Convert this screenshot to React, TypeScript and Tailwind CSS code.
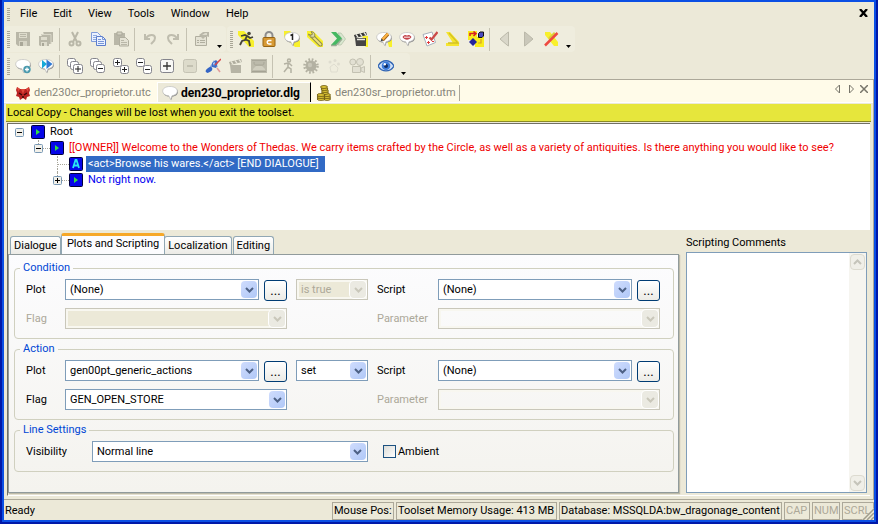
import React, { useState } from 'react';
import clsx from 'clsx';

const BUBBLE = 'M8 1.5c4.4 0 7.3 1.9 7.3 4.6 0 2.6-2.4 4.3-5.3 4.6L8.5 14.500l-1.700-3.700C3.300 10.600.7 8.800.7 6.100.7 3.400 3.600 1.500 8 1.500z';

const Bubble = () => (
  <g>
    <path d={BUBBLE} fill="#8d8d8d" transform="translate(.6 .8)" />
    <path d={BUBBLE} fill="#fff" stroke="#bdbdbb" strokeWidth=".7" />
  </g>
);

const Box = ({ x, y, s = 9, sign }: { x: number; y: number; s?: number; sign?: string }) => {
  const c = s / 2;
  return (
    <g>
      <rect x={x + 0.5} y={y + 0.5} width={s - 1} height={s - 1} rx="2" fill="#fff" stroke="#84848c" />
      {sign && <path d={`M${x + 2} ${y + c}h${s - 4}`} stroke="#222" />}
      {sign === '+' && <path d={`M${x + c} ${y + 2}v${s - 4}`} stroke="#222" />}
    </g>
  );
};

const icons: Record<string, React.ReactNode> = {
  save: (
    <g>
      <path d="M1 1h14v14H3l-2-2z" fill="#b9b7a8" />
      <path d="M4 2h8v5H4z" fill="#dedccd" />
      <path d="M5 3.500h6M5 5.500h6" stroke="#b9b7a8" />
      <path d="M4 10h8v5H4z" fill="#d6d4c5" />
      <path d="M5 11h3v4H5z" fill="#a9a798" />
    </g>
  ),
  saveAll: (
    <g>
      <path d="M5 1h10v10h-2v2h-2v2H2l-1-1V5h2V3h2z" fill="#b9b7a8" />
      <path d="M3.500 5V3.500h9.500V13M5.500 3V1.500" stroke="#d9d7c8" fill="none" />
      <path d="M3 6h6v3H3zM3 11h6v4H3z" fill="#dedccd" />
      <path d="M4 12h2v3H4z" fill="#a9a798" />
    </g>
  ),
  cut: (
    <g fill="none" stroke="#b9b7a8" strokeWidth="2">
      <path d="M5 1l5 10M11 1L6 11" />
      <circle cx="4.500" cy="12.500" r="2" />
      <circle cx="11.500" cy="12.500" r="2" />
    </g>
  ),
  copy: (
    <g>
      <path d="M1.500 1.500h6l3 3v6h-9z" fill="#eaf1ff" stroke="#7f9bd9" />
      <path d="M3 4.500h4M3 6.500h3M3 8.500h3" stroke="#8fabdf" />
      <path d="M6.500 5.500h6l3 3v6h-9z" fill="#eaf1ff" stroke="#5c7dcb" />
      <path d="M12.500 5.500v3h3M8 8.500h3M8 10.500h6M8 12.500h6" stroke="#7896d8" fill="none" />
    </g>
  ),
  paste: (
    <g>
      <path d="M1 2h11v12H1z" fill="#b9b7a8" />
      <path d="M4 1h5v3H4z" fill="#d6d4c5" stroke="#aaa899" />
      <path d="M6.500 6.500h6l3 3v5.500h-9z" fill="#e4e2d4" stroke="#b0ae9f" />
      <path d="M8 9.500h3M8 11.500h6M8 13.500h6" stroke="#b9b7a8" />
    </g>
  ),
  undo: (
    <g fill="none" stroke="#bfbdae" strokeWidth="2">
      <path d="M4 7c3-4 9-4 9 0 0 3-2 4-4 6" />
      <path d="M3 3v5h5" />
    </g>
  ),
  redo: (
    <g fill="none" stroke="#bfbdae" strokeWidth="2">
      <path d="M12 7c-3-4-9-4-9 0 0 3 2 4 4 6" />
      <path d="M13 3v5H8" />
    </g>
  ),
  props: (
    <g>
      <path d="M1.500 5.500h11v9h-11z" fill="#e4e2d4" stroke="#b0ae9f" />
      <path d="M3 9.500h2M6 9.500h5M3 11.500h2M6 11.500h5" stroke="#b0ae9f" />
      <path d="M5 4l4-3h6v5l-3-1-3 3-2-2z" fill="#b9b7a8" />
      <path d="M8 4l3-2h2v2z" fill="#dedccd" />
    </g>
  ),
  run: (
    <g>
      <path d="M0 0h6l10 10v6h-5L0 4z" fill="#f8f02c" />
      <circle cx="11" cy="2.500" r="1.800" fill="#44423a" />
      <path d="M3 5l4-1 3 1.500 2 1.500 3-1M9 5l-2 4-3 1-2 4M7.500 8.500L11 10l1 5" stroke="#44423a" strokeWidth="1.800" fill="none" />
    </g>
  ),
  lock: (
    <g>
      <path d="M4.500 8V4.500a3.500 3.500 0 0 1 7 0V8" fill="none" stroke="#8d8d8d" strokeWidth="2" />
      <rect x="2" y="6.500" width="12" height="9" rx="1" fill="#d79a35" stroke="#966414" />
      <path d="M10.500 9.500h-2.500a1.700 1.700 0 0 0 0 3.500h2.500" fill="none" stroke="#fff" strokeWidth="1.500" />
    </g>
  ),
  one: (
    <g>
      <path d="M0 0h6l10 10v6h-5L0 6z" fill="#f8f02c" />
      <Bubble />
      <path d="M6.500 4.500L8.500 3.500v5.500" fill="none" stroke="#222" strokeWidth="1.500" />
    </g>
  ),
  wrench: (
    <g>
      <path d="M0 0h6l10 10v6h-5L0 6z" fill="#f8f02c" />
      <path d="M5 5l8.500 8.500" stroke="#8f8a4a" strokeWidth="4" strokeLinecap="round" />
      <path d="M5 5l8.500 8.500" stroke="#ece27e" strokeWidth="2" strokeLinecap="round" />
      <path d="M4 .7c3 .3 4.500 2 3.500 5.300C4 7 2 5.500 1.500 3L4 4.500 5.500 3z" fill="#d9d6a8" stroke="#8f8a4a" />
    </g>
  ),
  chevrons: (
    <g>
      <path d="M8 2h3l4.500 6-4.500 6H8l4-6z" fill="#d9e8d0" stroke="#aab8a0" strokeWidth=".6" />
      <path d="M1 1h5l6 6.500L6 14H1l6-6.500z" fill="#46b862" />
      <path d="M1 14.500h5l6-6.500" fill="none" stroke="#9cab95" strokeWidth="1.300" />
    </g>
  ),
  clapper: (
    <g>
      <path d="M10 5h5v11h-2L8 12z" fill="#f8f02c" />
      <path d="M2 7h11v8H3z" fill="#454545" />
      <path d="M1 4l12-3 1 3L2 7z" fill="#333" />
      <path d="M3 3.500l2 2.500M7 2.500l2 2.500M11 1.500l2 2.500M4 8.500h8" stroke="#e8e8e0" strokeWidth="1.300" />
    </g>
  ),
  pencil: (
    <g>
      <path d="M11 9h5v7h-3z" fill="#f8f02c" />
      <Bubble />
      <path d="M6.500 9L12 3" stroke="#a46618" strokeWidth="3.400" />
      <path d="M6.500 8.500L12 2.500" stroke="#ffb545" strokeWidth="2" />
      <path d="M4.500 10.500l1-3 2 2z" fill="#444" />
    </g>
  ),
  mouth: (
    <g>
      <Bubble />
      <path d="M3.500 6c2-2.500 3-2 4.500-1.500C9.500 4 10.500 3.500 12.500 6 10 9.500 6 9.500 3.500 6z" fill="#c4434a" />
      <path d="M5 6.200h6" stroke="#f5dada" strokeWidth="1.200" />
    </g>
  ),
  check: (
    <g>
      <path d="M1 3.500l9-2.500 3.500 10.500-8.500 3.500z" fill="#fff" stroke="#a7afba" />
      <path d="M3 6.500h3M4.500 5v3M5 11.500h3M6.500 10v3M10 10.500h2" stroke="#e13b3b" />
      <path d="M7.500 6.500l2 2L15.500 1" fill="none" stroke="#cb4a48" strokeWidth="2.200" />
    </g>
  ),
  arrow: (
    <g>
      <path d="M1 1h4l9 10v4H1v-3h7z" fill="#f5e52e" />
      <path d="M4 2l9 10H3" fill="none" stroke="#d3c125" strokeWidth="1.300" />
    </g>
  ),
  flow: (
    <g>
      <path d="M0 0h9v6h7v10H7V9H0z" fill="#f8ec1b" />
      <path d="M10.500 2.500l1.500-1.500h3.500v4l-1.500 1.500h-3.500z" fill="#4a4ac0" stroke="#111" />
      <path d="M2 5V2.500h5M5.500.500L8 2.500 5.500 5" fill="none" stroke="#d82222" strokeWidth="1.500" />
      <path d="M5 7l4 4-4 4-4-4z" fill="#23239c" />
      <path d="M13 8v4h-3" fill="none" stroke="#d8a222" strokeWidth="1.200" />
    </g>
  ),
  prev: <path d="M11.500 1v14l-1.500-1L3 8l7-6z" fill="#d9d7c9" stroke="#bbb9aa" />,
  next: <path d="M4.500 1v14L6 14l7-6-7-6z" fill="#cac8ba" stroke="#bbb9aa" />,
  redx: (
    <g>
      <path d="M2 1h5l8 10v4h-4L2 4z" fill="#f8f02c" />
      <path d="M11 1l2 2-6 6-2-2z" fill="#d9cf3c" />
      <path d="M14.500 2L2 14.500" stroke="#ee4a40" strokeWidth="2.500" />
    </g>
  ),
  addBubble: (
    <g>
      <Bubble />
      <circle cx="12" cy="11.500" r="3.700" fill="#4a9aae" />
      <path d="M12 9.500v4M10 11.500h4" stroke="#fff" strokeWidth="1.300" />
    </g>
  ),
  playBubble: (
    <g>
      <Bubble />
      <path d="M4 2l5 4-5 4.500z" fill="#16a9d8" />
      <path d="M8.500 1.500l6 4.500-6 5z" fill="#2f7ad4" />
    </g>
  ),
  expandAll: (
    <g>
      <Box x={0} y={0} />
      <Box x={3} y={3} />
      <Box x={6} y={6} s={10} sign="+" />
    </g>
  ),
  collapseAll: (
    <g>
      <Box x={0} y={0} />
      <Box x={3} y={3} />
      <Box x={6} y={6} s={9} sign="-" />
    </g>
  ),
  expandTwo: (
    <g>
      <Box x={0} y={0} sign="+" />
      <Box x={7} y={7} sign="+" />
    </g>
  ),
  collapseTwo: (
    <g>
      <Box x={0} y={0} sign="-" />
      <Box x={7} y={7} sign="-" />
    </g>
  ),
  plus: (
    <g>
      <rect x="1.500" y="1.500" width="13" height="13" rx="2" fill="#f8f8f6" stroke="#84848c" />
      <path d="M4 8h8M8 4v8" stroke="#333" strokeWidth="1.300" />
    </g>
  ),
  minus: (
    <g>
      <rect x="1.500" y="1.500" width="13" height="13" rx="2" fill="#dddbcb" stroke="#c5c3b4" />
      <path d="M5 8h6" stroke="#a8a697" />
    </g>
  ),
  link: (
    <g>
      <path d="M4 12l5-8 3 5" fill="none" stroke="#7f9edb" strokeWidth="2" />
      <ellipse cx="4" cy="12" rx="3.700" ry="2.200" fill="#3465c5" transform="rotate(-35 4 12)" />
      <path d="M7 5l4-3 2 2-2 6-4-1z" fill="#3b6bc9" />
      <path d="M8 5l2-1-1 4z" fill="#cbd9f5" />
      <path d="M10 7l6-6" stroke="#d8474a" strokeWidth="1.500" />
      <path d="M12 10l3 4" stroke="#e29a9a" strokeWidth="1.500" />
    </g>
  ),
  clapperOff: (
    <g>
      <path d="M2 7h11v8H3z" fill="#b6b4a5" />
      <path d="M1 4l12-3 1 3L2 7z" fill="#aeac9d" />
      <path d="M3 3.500l2 2.500M7 2.500l2 2.500M11 1.500l2 2.500" stroke="#e8e6d8" strokeWidth="1.300" />
    </g>
  ),
  stage: (
    <g>
      <path d="M0 1h16v14H0z" fill="#bcbaab" />
      <path d="M1 2.500h14M3 4c0 4 2 3 5 3s5 1 5-3" stroke="#a9a798" fill="none" />
      <path d="M2 11l3-3h6l3 3v1H2z" fill="#d0cebf" />
      <path d="M1 13.500h14" stroke="#a5a394" />
    </g>
  ),
  walk: (
    <g fill="none" stroke="#b3b1a2" strokeWidth="1.500">
      <circle cx="9" cy="2.500" r="1.500" />
      <path d="M4 6l4-1 2 1 2 2M8 5v4l3 2v4M8 9l-4 5" />
    </g>
  ),
  gear: (
    <g>
      <circle cx="8" cy="8" r="5.500" fill="#b3b1a2" />
      <circle cx="8" cy="8" r="6.500" fill="none" stroke="#b3b1a2" strokeWidth="2.500" strokeDasharray="1.700 1.700" />
      <circle cx="7" cy="7" r="2.200" fill="#c8c6b8" />
    </g>
  ),
  paw: (
    <g fill="#dfddd0">
      <circle cx="4" cy="4" r="1.500" />
      <circle cx="9" cy="2.500" r="1.500" />
      <circle cx="12.500" cy="6" r="1.500" />
      <path d="M4 9l4-3 4 4-1 4H5z" fill="none" stroke="#dfddd0" />
    </g>
  ),
  camera: (
    <g fill="#e2e0d3" stroke="#c3c1b2">
      <circle cx="3.800" cy="4" r="3" />
      <circle cx="11" cy="4" r="3.500" />
      <path d="M3.500 8.500h8v6h-8zM12 10l3.500-1.500v6L12 13z" />
    </g>
  ),
  eye: (
    <g>
      <path d="M0 8c4-7 12-7 16 0-4 6.500-12 6.500-16 0z" fill="#cfe0f7" stroke="#2f64b4" strokeWidth="1.300" />
      <circle cx="8" cy="7.700" r="4.300" fill="#3d7cda" />
      <circle cx="8" cy="8" r="2" fill="#0f2c63" />
      <circle cx="6.800" cy="6.200" r="1.200" fill="#fff" />
    </g>
  ),
  creature: (
    <g>
      <path d="M2 2l3 2h6l3-2 1 3-1 3 1 3-3 1-1 3-3-2-3 2-1-3-3-1 1-3-1-3z" fill="#b92222" />
      <path d="M2 2l3 2-2 3zM14 2l-3 2 2 3zM6 4h4l-2 5z" fill="#e04a3c" />
      <path d="M4 8l3 2M12 8l-3 2M7 12h2" stroke="#3a0808" strokeWidth="1.300" />
    </g>
  ),
  speech: <Bubble />,
  coins: (
    <g fill="#e8cf3a" stroke="#5c4a0c" strokeWidth=".8">
      <path d="M8 11.500h6v3H8z" />
      <ellipse cx="11" cy="14" rx="3.500" ry="1.400" />
      <ellipse cx="11" cy="12" rx="3.500" ry="1.400" />
      <ellipse cx="11" cy="10" rx="3.500" ry="1.400" />
      <ellipse cx="9" cy="8" rx="3.500" ry="1.400" />
      <ellipse cx="9" cy="6" rx="3.500" ry="1.400" />
      <ellipse cx="8.500" cy="4" rx="3.500" ry="1.400" />
      <ellipse cx="8" cy="2" rx="3.500" ry="1.400" />
      <ellipse cx="5" cy="14" rx="4" ry="1.400" />
      <ellipse cx="5" cy="12" rx="4" ry="1.400" />
      <ellipse cx="5" cy="10" rx="4" ry="1.400" />
    </g>
  ),
};

const Icon = ({ name }: { name: string }) => (
  <svg viewBox="0 0 16 16" className="size-4 shrink-0" aria-hidden="true">
    {icons[name]}
  </svg>
);

const Grip = ({ className }: { className: string }) => (
  <svg className={clsx('w-[3px] shrink-0', className)} aria-hidden="true">
    <path d="M1.500 0v30" stroke="#a8a595" strokeWidth="3" strokeDasharray="1 1" />
  </svg>
);

const mainTools = ['save', 'saveAll', '|', 'cut', 'copy', 'paste', '|', 'undo', 'redo', '|', 'props', 'v'];
const scriptTools = [
  'run', 'lock', 'one', 'wrench', 'chevrons', 'clapper', 'pencil', 'mouth', 'check', 'arrow', 'flow',
  '|', 'prev', 'next', 'redx', 'v',
];
const dialogTools = [
  'addBubble', 'playBubble', '|', 'expandAll', 'collapseAll', 'expandTwo', 'collapseTwo', 'plus', 'minus',
  'link', 'clapperOff', 'stage', '|', 'walk', 'gear', 'paw', 'camera', '|', 'eye', 'v',
];

const Toolbar = ({ label, tools }: { label: string; tools: string[] }) => (
  <div role="toolbar" aria-label={label} className="flex h-[26px] items-center rounded-sm bg-[#efedde] pl-[3px]">
    <Grip className="h-[17px]" />
    <div className="flex items-center pl-px">
      {tools.map((tool, i) => {
        if (tool === '|') return <span key={i} className="mr-[3px] ml-[2px] h-[23px] w-px bg-[#c5c2b2]" />;
        if (tool === 'v') {
          return (
            <button key={i} type="button" aria-label="Toolbar options" className="flex h-[23px] w-[13px] items-end justify-center pb-[3px]">
              <svg viewBox="0 0 5 3" className="h-[3px] w-[5px]"><path d="M0 0h5L2.500 3z" /></svg>
            </button>
          );
        }
        return (
          <button key={i} type="button" aria-label={tool} className="flex h-[23px] w-[23px] items-center justify-center">
            <Icon name={tool} />
          </button>
        );
      })}
    </div>
  </div>
);

interface ComboProps {
  label: string;
  options: string[];
  disabled?: boolean;
  blank?: boolean;
  id?: string;
  className?: string;
}

const Combo = ({ label, options, disabled, blank, id, className }: ComboProps) => (
  <div
    className={clsx(
      'relative h-[21px] border',
      disabled ? 'border-[#c9c7ba]' : 'border-[#7f9db9] bg-white',
      className,
    )}
  >
    <select
      id={id}
      aria-label={label}
      disabled={disabled}
      className={clsx(
        'block h-full w-full appearance-none border-2 pr-5 pl-[2px] text-black opacity-100 outline-none disabled:text-[#aca899]',
        disabled ? 'border-[#f8f7f0]' : 'border-white',
        disabled && !blank ? 'bg-[#ece9d8]' : 'bg-transparent',
      )}
    >
      {options.map((option) => (
        <option key={option}>{option}</option>
      ))}
    </select>
    <span
      className={clsx(
        'pointer-events-none absolute inset-y-px right-px flex w-[16px] items-center justify-center rounded-sm',
        disabled ? 'bg-[#ebeae2] text-[#c9c7ba] ring-1 ring-white' : 'bg-linear-to-br from-[#cfdcfd] to-[#b0c8f7] text-[#4d6185]',
      )}
    >
      <Chevron />
    </span>
  </div>
);

const Chevron = ({ up }: { up?: boolean }) => (
  <svg viewBox="0 0 9 6" className={clsx('h-[6px] w-[9px]', up && 'rotate-180')} aria-hidden="true">
    <path d="M1 1l3.500 3.500L8 1" fill="none" stroke="currentColor" strokeWidth="2" />
  </svg>
);

const Browse = ({ label }: { label: string }) => (
  <button
    type="button"
    aria-label={label}
    className="mt-px ml-[5px] flex h-[21px] w-[23px] items-center justify-center rounded-[3px] border border-[#003c74] bg-linear-to-b from-white to-[#ecebe6] text-[13px]"
  >
    ...
  </button>
);

const Group = ({ title, children }: { title: string; children: React.ReactNode }) => (
  <fieldset className="min-w-0 rounded border border-[#d0d0bf] pr-[13px] pb-[9px] pl-[11px]">
    <legend className="-ml-[6px] h-3 px-[3px] leading-3 text-[#0046d5]">{title}</legend>
    {children}
  </fieldset>
);

interface LogicGroupProps {
  title: string;
  plot: string;
  flag?: string;
  operator: string;
}

const LogicGroup = ({ title, plot, flag, operator }: LogicGroupProps) => {
  const key = title.toLowerCase();
  return (
    <Group title={title}>
      <div className="mt-[5px] grid grid-cols-[39px_1fr_28px_90px_61px_1fr_28px] gap-y-[7px]">
        <label htmlFor={`${key}-plot`} className="self-center">Plot</label>
        <Combo id={`${key}-plot`} label={`${title} plot`} options={[plot]} />
        <Browse label={`Browse ${key} plot`} />
        <Combo label={`${title} operator`} options={[operator]} disabled={!flag} className="mx-[9px]" />
        <label htmlFor={`${key}-script`} className="self-center">Script</label>
        <Combo id={`${key}-script`} label={`${title} script`} options={['(None)']} />
        <Browse label={`Browse ${key} script`} />

        <label htmlFor={`${key}-flag`} className={clsx('self-center', !flag && 'text-[#aca899]')}>Flag</label>
        <Combo id={`${key}-flag`} label={`${title} flag`} options={[flag || '']} disabled={!flag} className="col-span-2" />
        <span />
        <label htmlFor={`${key}-parameter`} className="self-center text-[#aca899]">Parameter</label>
        <Combo id={`${key}-parameter`} label={`${title} parameter`} options={['']} disabled blank className="col-span-2" />
      </div>
    </Group>
  );
};

interface TreeRow {
  text: string;
  indent: string;
  color: string;
  letter?: boolean;
  up?: boolean;
  sign?: string;
}

const treeRows: TreeRow[] = [
  { text: 'Root', indent: 'pl-[7px]', color: 'text-black', sign: '-' },
  {
    text: '[[OWNER]] Welcome to the Wonders of Thedas. We carry items crafted by the Circle, as well as a variety of antiquities. Is there anything you would like to see?',
    indent: 'pl-[26px]', color: 'text-[#f00000]', up: true, sign: '-',
  },
  { text: '<act>Browse his wares.</act> [END DIALOGUE]', indent: 'pl-[45px]', color: 'text-black', letter: true, up: true },
  { text: 'Not right now.', indent: 'pl-[45px]', color: 'text-[#0000f0]', up: true, sign: '+' },
];

const DialogTree = () => {
  const [selected, setSelected] = useState(2);

  return (
    <ul role="tree" aria-label="Dialogue lines" className="h-[107px] overflow-hidden border-t border-[#716f64] bg-white">
      {treeRows.map((row, i) => (
        <li key={row.text} role="treeitem" aria-selected={i === selected} className={clsx('flex h-4 items-center', row.indent)}>
          <span className="flex h-4 w-[9px] shrink-0 flex-col items-center">
            <span className={clsx('h-1 border-l border-dotted', row.up ? 'border-[#a8a69a]' : 'border-transparent')} />
            {row.sign ? (
              <svg viewBox="0 0 9 9" className="size-[9px]" aria-hidden="true">
                <rect x=".5" y=".5" width="8" height="8" rx="1" fill="#f3f1ea" stroke="#7898b5" />
                <path d={row.sign === '+' ? 'M2 4.500h5M4.500 2v5' : 'M2 4.500h5'} stroke="#000" />
              </svg>
            ) : (
              <span className="flex-1 border-l border-dotted border-[#a8a69a]" />
            )}
            {!row.sign && <span className="h-[3px] border-l border-dotted border-[#a8a69a]" />}
          </span>
          <span
            className={clsx(
              'shrink-0 border-t border-dotted',
              row.up ? 'border-[#a8a69a]' : 'border-transparent',
              row.sign ? 'w-[7px]' : '-ml-1 w-[11px]',
            )}
          />
          <svg viewBox="0 0 14 14" className="size-[14px] shrink-0" aria-hidden="true">
            <rect x=".5" y=".5" width="13" height="13" rx="1" fill="#0606e8" stroke="#00003c" />
            {row.letter ? (
              <path d="M4 11l2.500-8h1L10 11M5 8.500h4" fill="none" stroke="#28e6f4" strokeWidth="1.800" />
            ) : (
              <path d="M5 4l4 3-4 3z" fill="#2fe043" />
            )}
          </svg>
          <button
            type="button"
            onClick={() => setSelected(i)}
            className={clsx(
              'ml-[3px] h-4 px-[2px] leading-4 whitespace-nowrap',
              i === selected ? 'bg-[#316ac5] pr-[6px] text-white' : row.color,
            )}
          >
            {row.text}
          </button>
        </li>
      ))}
    </ul>
  );
};

const pageTabs = ['Dialogue', 'Plots and Scripting', 'Localization', 'Editing'];

const ScrollButton = ({ up }: { up?: boolean }) => (
  <button
    type="button"
    aria-label={up ? 'Scroll up' : 'Scroll down'}
    className="flex h-4 w-[15px] items-center justify-center rounded-sm border border-[#dddbd0] bg-[#f0efe8] text-[#c5c4ba]"
  >
    <Chevron up={up} />
  </button>
);

const Cell = ({ children, className }: { children: React.ReactNode; className: string }) => (
  <span className={clsx('h-[18px] shrink-0 overflow-hidden border border-[#aca899] pl-px leading-4 whitespace-nowrap', className)}>
    {children}
  </span>
);

export default function App() {
  const [tab, setTab] = useState('Plots and Scripting');

  return (
    <div className="flex min-h-screen flex-col border-x-2 border-b-2 border-[#0018a8] font-['Roboto',sans-serif] text-[11px] leading-[14px] text-black">
      <div className="flex flex-1 flex-col border-2 border-[#0b4fe4] bg-[#ece9d8]">
        <header>
          <nav aria-label="Main menu" className="flex h-6 items-center pl-[3px]">
            <Grip className="h-[13px]" />
            <div className="flex flex-1 pl-[2px]">
              {['File', 'Edit', 'View', 'Tools', 'Window', 'Help'].map((item) => (
                <button key={item} type="button" className="px-2">{item}</button>
              ))}
            </div>
            <button type="button" aria-label="Close window" className="mr-[6px] mb-[2px]">
              <svg viewBox="0 0 9 8" className="h-2 w-[9px]"><path d="M1 0l7 8M8 0L1 8" stroke="#000" strokeWidth="2.300" /></svg>
            </button>
          </nav>
          <div className="flex gap-px">
            <Toolbar label="Standard" tools={mainTools} />
            <Toolbar label="Scripting" tools={scriptTools} />
          </div>
          <div className="mt-px flex">
            <Toolbar label="Dialogue" tools={dialogTools} />
          </div>
        </header>

        <main className="flex flex-1 flex-col border-t border-r border-[#aca899]">
          <div className="flex h-[23px] items-end border-b border-white bg-[#fffbe9] pl-[2px]">
            <div role="tablist" aria-label="Open files" className="flex flex-1 items-end text-[#86857a]">
              <button type="button" role="tab" aria-selected="false" className="flex h-[19px] w-[151px] items-center gap-[3px] pl-[9px]">
                <Icon name="creature" />
                den230cr_proprietor.utc
              </button>
              <button
                type="button"
                role="tab"
                aria-selected="true"
                className="flex h-[20px] w-[154px] items-center gap-[3px] border-t border-r border-l border-white border-r-black bg-[#ece9d8] pl-1 text-xs font-bold text-black"
              >
                <Icon name="speech" />
                den230_proprietor.dlg
              </button>
              <button type="button" role="tab" aria-selected="false" className="flex h-[19px] items-center gap-[3px] pl-[5px]">
                <Icon name="coins" />
                den230sr_proprietor.utm
                <span className="h-4 w-px bg-[#aca899]" />
              </button>
            </div>
            <div className="flex items-center gap-[5px] self-center pr-[5px] pb-1">
              <button type="button" aria-label="Scroll tabs left">
                <svg viewBox="0 0 8 10" className="h-[10px] w-2"><path d="M5.500 1v8L1.500 5z" fill="none" stroke="#77756a" /></svg>
              </button>
              <button type="button" aria-label="Scroll tabs right">
                <svg viewBox="0 0 8 10" className="h-[10px] w-2"><path d="M2.500 1v8l4-4z" fill="none" stroke="#77756a" /></svg>
              </button>
              <button type="button" aria-label="Close file">
                <svg viewBox="0 0 8 8" className="size-2"><path d="M0 0l8 8M8 0L0 8" stroke="#77756a" strokeWidth="1.500" /></svg>
              </button>
            </div>
          </div>

          <p className="mx-[2px] mt-px h-[18px] border-b border-[#8a8a24] bg-[#e6e63c] pl-px leading-[17px]">
            Local Copy - Changes will be lost when you exit the toolset.
          </p>

          <div className="mx-[3px] mt-px mb-[3px] flex flex-1 flex-col border-b border-l border-b-white border-l-[#716f64]">
            <DialogTree />

            <div className="flex flex-1 pr-[3px] pb-[2px]">
              <div className="flex min-w-0 flex-1 flex-col">
                <div role="tablist" aria-label="Line properties" className="flex h-6 items-end pl-[2px]">
                  {pageTabs.map((name) => (
                    <button
                      key={name}
                      type="button"
                      role="tab"
                      aria-selected={tab === name}
                      onClick={() => setTab(name)}
                      className={clsx(
                        'rounded-t-[3px] border border-b-0 border-[#91a7b4]',
                        tab === name
                          ? '-mx-px h-[21px] border-t-[3px] border-t-[#f6a828] bg-[#fcfcfe] px-[5px] pb-[2px]'
                          : 'mr-px h-[18px] bg-linear-to-b from-white to-[#ecebe6] px-[3px]',
                      )}
                    >
                      {name}
                    </button>
                  ))}
                </div>

                <div className="flex flex-1 flex-col gap-1 border border-[#919b9c] bg-linear-to-b from-[#fcfcfe] to-[#f4f3ee] py-[7px] pr-1 pl-[5px] shadow-[1px_1px_1px_#bdbaa8]">
                  <LogicGroup title="Condition" plot="(None)" operator="is true" />
                  <LogicGroup title="Action" plot="gen00pt_generic_actions" operator="set" flag="GEN_OPEN_STORE" />
                  <Group title="Line Settings">
                    <div className="mt-[5px] grid grid-cols-[66px_17fr_18fr] items-center">
                      <label htmlFor="visibility">Visibility</label>
                      <Combo id="visibility" label="Visibility" options={['Normal line']} />
                      <label className="flex items-center gap-[2px] pl-[15px]">
                        <input
                          type="checkbox"
                          className="size-[13px] appearance-none border border-[#1c5180] bg-linear-to-br from-[#dcdcd7] to-white checked:bg-[#21a121]"
                        />
                        Ambient
                      </label>
                    </div>
                  </Group>
                </div>
              </div>

              <div className="ml-[7px] flex w-[181px] shrink-0 flex-col pt-[6px]">
                <label htmlFor="comments" className="mb-[2px]">Scripting Comments</label>
                <div className="flex flex-1 border border-[#7f9db9] bg-white">
                  <textarea id="comments" className="min-w-0 flex-1 resize-none bg-transparent p-1 outline-none" />
                  <div className="flex w-[17px] flex-col items-center justify-between bg-[#f6f5f0] py-px">
                    <ScrollButton up />
                    <ScrollButton />
                  </div>
                </div>
              </div>
            </div>
          </div>
        </main>

        <footer className="flex h-[21px] items-end gap-[2px] border-t border-[#aca899] pl-px">
          <span className="h-[18px] flex-1 leading-[18px]">Ready</span>
          <Cell className="w-[62px]">Mouse Pos:</Cell>
          <Cell className="w-[161px]">Toolset Memory Usage: 413 MB</Cell>
          <Cell className="w-[223px]">Database: MSSQLDA:bw_dragonage_content</Cell>
          <Cell className="w-[26px] text-[#aca899]">CAP</Cell>
          <Cell className="w-7 text-[#aca899]">NUM</Cell>
          <div className="relative flex">
            <Cell className="w-8 text-[#aca899]">SCRL</Cell>
            <svg viewBox="0 0 12 12" className="absolute right-0 bottom-0 size-3" aria-hidden="true">
              <path d="M12 0v12H0z" fill="#ece9d8" />
              <path d="M1 12L12 1M5 12l7-7M9 12l3-3" stroke="#a09d8c" strokeWidth="1.500" />
            </svg>
          </div>
        </footer>
      </div>
    </div>
  );
}
